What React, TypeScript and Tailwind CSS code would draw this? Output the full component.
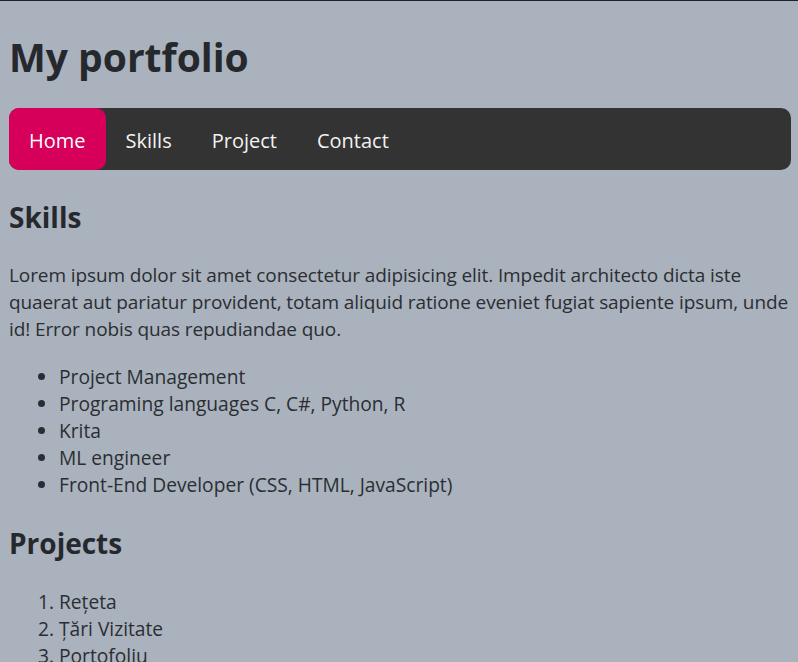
import React from "react";

const navItems = ["Home", "Skills", "Project", "Contact"];

const skills = [
  "Project Management",
  "Programing languages C, C#, Python, R",
  "Krita",
  "ML engineer",
  "Front-End Developer (CSS, HTML, JavaScript)",
];

const projects = ["Rețeta", "Țări Vizitate", "Portofoliu"];

export default function App() {
  return (
    <div
      className="min-h-screen bg-[#aab2bd] border-t border-[#202124] pl-[9px] pr-[7px] text-[#2a2e33]"
      style={{ fontFamily: '"Open Sans", "Noto Sans", sans-serif' }}
    >
      <h1 className="pt-[26px] text-[39px] leading-[60px] font-bold text-[#25282c]">My portfolio</h1>

      <nav className="mt-[21px] flex h-[62px] items-stretch rounded-[10px] bg-[#333333]">
        {navItems.map((item, i) => (
          <a
            key={item}
            href="#"
            className={
              "flex items-center px-5 pt-[3px] text-[20px] text-[#f2f2f2] " +
              (i === 0 ? "rounded-[10px] bg-[#d6005a] text-white" : "")
            }
          >
            {item}
          </a>
        ))}
      </nav>

      <h2 className="mt-[26px] text-[28px] font-bold leading-[42px] text-[#25282c]">Skills</h2>
      <p className="mt-[24px] text-[19px] leading-[27px] tracking-[-0.1px]">
        Lorem ipsum dolor sit amet consectetur adipisicing elit. Impedit architecto dicta iste
        <br />
        quaerat aut pariatur provident, totam aliquid ratione eveniet fugiat sapiente ipsum, unde
        <br />
        id! Error nobis quas repudiandae quo.
      </p>

      <ul className="mt-[20px] list-disc pl-[50px] text-[19.2px] leading-[27px]">
        {skills.map((s) => (
          <li key={s}>{s}</li>
        ))}
      </ul>

      <h2 className="mt-[24px] text-[28px] font-bold leading-[42px] text-[#25282c]">Projects</h2>
      <ol className="mt-[24px] list-decimal pl-[50px] text-[19.2px] leading-[27px]">
        {projects.map((p) => (
          <li key={p}>{p}</li>
        ))}
      </ol>
    </div>
  );
}
